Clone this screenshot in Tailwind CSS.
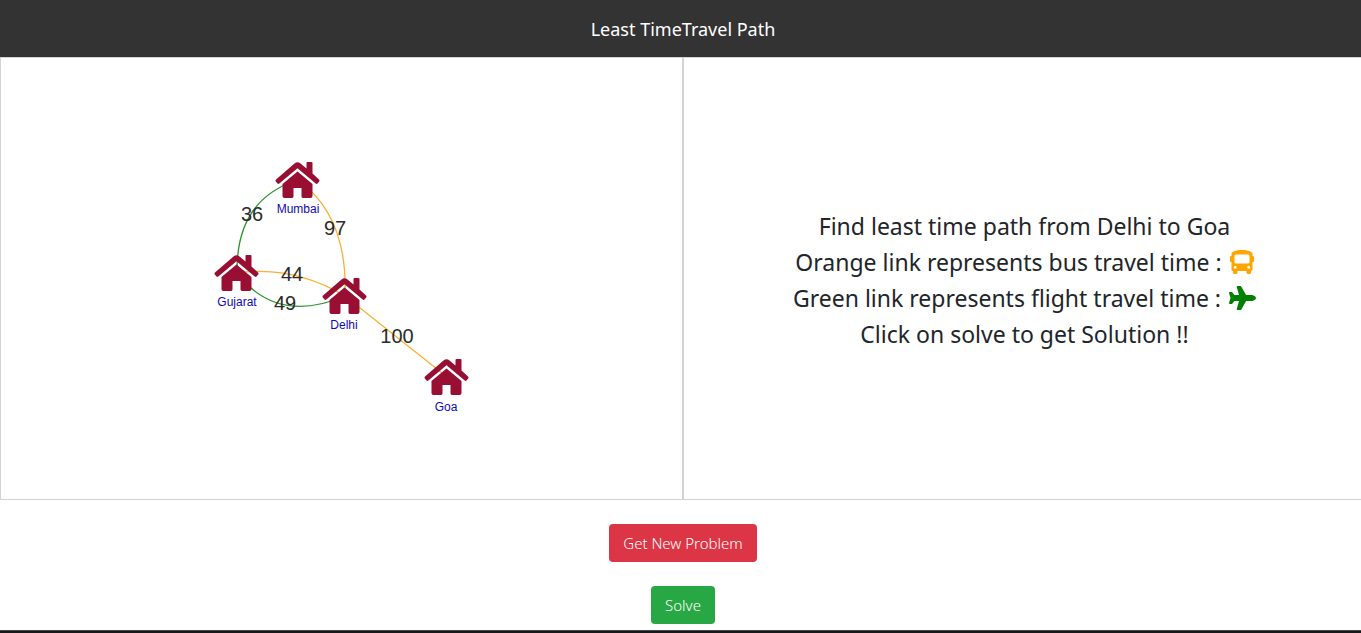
<!DOCTYPE html>
<html lang="en">
<head>
<meta charset="utf-8">
<meta name="viewport" content="width=device-width, initial-scale=1">
<title>Least Time Travel Path</title>
<script src="https://cdn.jsdelivr.net/npm/@tailwindcss/browser@4"></script>
</head>
<body class="overflow-x-hidden bg-white text-[#212529] font-['Noto_Sans',sans-serif]">
<div class="-mr-[5px] flex min-h-screen flex-col">
  <header class="flex h-[57px] items-center justify-center bg-[#333333]">
    <h1 class="text-lg text-white">Least TimeTravel Path</h1>
  </header>
  <main class="flex flex-col">
    <div class="grid grid-cols-2">
      <section class="flex justify-center border border-[#d3d3d3]" aria-label="City map">
        <svg class="w-[681px] max-w-full" viewBox="1 58 681 441" font-family="Liberation Sans, sans-serif" text-anchor="middle">
          <defs>
            <g id="house" fill="#990f33">
              <path d="M0-8.500L15 4V16Q15 18 13 18H6Q4 18 4 16.500V8H-4V16.500Q-4 18-6 18H-13Q-15 18-15 16V4Z"/>
              <path d="M9-17Q9-18 10-18H14Q15-18 15-17V-6.500L21.500-.5Q22.500.5 21.700 1.500L20 3.500Q19.200 4.300 18.200 3.500L0-11.800-18.200 3.500Q-19.200 4.300-20 3.500L-21.700 1.500Q-22.500.5-21.500-.5L-3-16.500Q0-19 3-16.500L9-11.500Z"/>
            </g>
          </defs>
          <g fill="none" stroke-width="1.300">
            <path stroke="#2f922f" d="M298 180Q236 199 237 273M237 273Q277 325 345 296"/>
            <path stroke="#f8b137" d="M298 180Q348 216 345 296M237 273Q293 265 345 296M345 296L447 377"/>
          </g>
          <use href="#house" x="297.500" y="180"/>
          <use href="#house" x="236.500" y="273"/>
          <use href="#house" x="344.500" y="296"/>
          <use href="#house" x="446.500" y="377"/>
          <g font-size="12" fill="#1208b4">
            <text x="298" y="213">Mumbai</text>
            <text x="237" y="306">Gujarat</text>
            <text x="344" y="329">Delhi</text>
            <text x="446" y="411">Goa</text>
          </g>
          <g font-size="20" fill="#2b2b2b">
            <text x="252" y="221">36</text>
            <text x="335" y="235">97</text>
            <text x="292" y="281">44</text>
            <text x="285" y="310">49</text>
            <text x="397" y="343">100</text>
          </g>
        </svg>
      </section>
      <section class="flex flex-col items-center justify-center border border-[#d3d3d3] pt-0.5 text-[23px] leading-9">
        <p>Find least time path from Delhi to Goa</p>
        <p class="flex items-center gap-2">Orange link represents bus travel time :
          <svg class="size-6" viewBox="0 0 512 512" fill="#ffa500" role="img" aria-label="Bus"><path d="M488 128h-8V80C480 35 381 0 256 0S32 35 32 80v48h-8c-13 0-24 11-24 24v80c0 13 11 24 24 24h8v160c0 18 14 32 32 32v32c0 18 14 32 32 32h32c18 0 32-14 32-32v-32h192v32c0 18 14 32 32 32h32c18 0 32-14 32-32v-32h6c16 0 26-13 26-26V256h8c13 0 24-11 24-24v-80c0-13-11-24-24-24zM112 400a32 32 0 1 1 0-64 32 32 0 0 1 0 64zm16-112c-18 0-32-14-32-32V128c0-18 14-32 32-32h256c18 0 32 14 32 32v128c0 18-14 32-32 32zm272 112a32 32 0 1 1 0-64 32 32 0 0 1 0 64z"/></svg>
        </p>
        <p class="flex items-center gap-2">Green link represents flight travel time :
          <svg class="h-6 w-[27px]" viewBox="0 0 576 512" fill="#008000" role="img" aria-label="Flight"><path d="M480 192H365L260 8a16 16 0 0 0-14-8h-65c-11 0-19 10-16 20l49 172H112l-43-58a16 16 0 0 0-13-6H16c-10 0-18 10-16 20l32 108L0 364c-2 10 6 20 16 20h40c5 0 10-2 13-6l43-58h102l-49 172c-3 10 5 20 16 20h65c6 0 11-3 14-8l105-184h115c35 0 96-29 96-64s-61-64-96-64z"/></svg>
        </p>
        <p>Click on solve to get Solution !!</p>
      </section>
    </div>
    <div class="flex flex-col items-center gap-6 pt-6 pb-1.5 text-[15px] font-light text-white">
      <button type="button" class="h-[38px] rounded bg-[#dc3545] px-3.5">Get New Problem</button>
      <button type="button" class="h-[38px] rounded bg-[#28a745] px-3.5">Solve</button>
    </div>
  </main>
  <footer class="mt-auto h-[3px] border-t border-[#47474a] bg-[#18181a]"></footer>
</div>
</body>
</html>
